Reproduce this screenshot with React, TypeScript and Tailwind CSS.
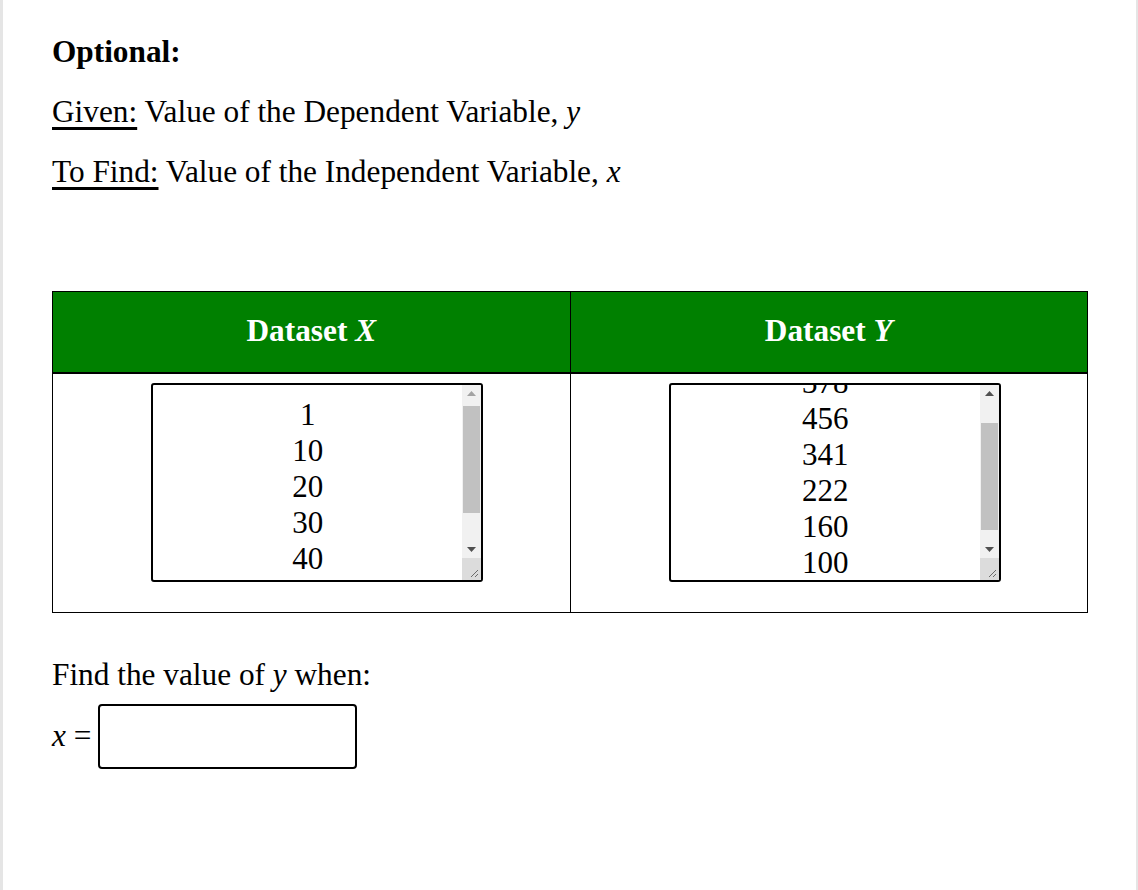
import React from "react";

const serif = { fontFamily: '"Liberation Serif", "Times New Roman", serif' };

const xValues = ["1", "10", "20", "30", "40"];
const yValues = ["378", "456", "341", "222", "160", "100"];

type ScrollBoxProps = {
  values: string[];
  offsetClass: string;
  thumbClass: string;
  upArrowColor: string;
};

const Triangle: React.FC<{ dir: "up" | "down"; color: string }> = ({ dir, color }) => (
  <svg width="9" height="5" viewBox="0 0 9 5">
    {dir === "up" ? (
      <polygon points="0,5 9,5 4.5,0" fill={color} />
    ) : (
      <polygon points="0,0 9,0 4.5,5" fill={color} />
    )}
  </svg>
);

// read-only list box that looks like a scrolled textarea
const ScrollBox: React.FC<ScrollBoxProps> = ({ values, offsetClass, thumbClass, upArrowColor }) => {
  return (
    <div className="flex h-[199px] w-[332px] overflow-hidden rounded-[3px] border-2 border-black bg-white">
      <div className="flex-1 overflow-hidden">
        <div className={`flex flex-col items-center ${offsetClass}`}>
          {values.map((v) => (
            <div key={v} className="h-[36px] text-[31px] leading-[36px] text-black">
              {v}
            </div>
          ))}
        </div>
      </div>
      <div className="flex w-[19px] flex-col bg-[#f1f1f1]">
        <div className="flex h-[17px] items-center justify-center">
          <Triangle dir="up" color={upArrowColor} />
        </div>
        <div className="flex-1 pl-[1px] pr-[1px]">
          <div className={`w-full bg-[#c1c1c1] ${thumbClass}`} />
        </div>
        <div className="flex h-[17px] items-center justify-center">
          <Triangle dir="down" color="#505050" />
        </div>
        <div className="flex h-[22px] items-end justify-end bg-[#dcdcdc] p-[2px]">
          <svg width="9" height="9" viewBox="0 0 9 9">
            <line x1="1" y1="8" x2="8" y2="1" stroke="#6b6b6b" strokeWidth="1" />
            <line x1="5" y1="8" x2="8" y2="5" stroke="#6b6b6b" strokeWidth="1" />
          </svg>
        </div>
      </div>
    </div>
  );
};

const App: React.FC = () => {
  return (
    <div
      className="flex min-h-[890px] w-full border-l-[3px] border-r-2 border-[#e5e5e5] bg-white text-black"
      style={serif}
    >
      <div className="w-full pl-[49px] pr-[48px] pt-[34px]">
        <h3 className="text-[31.3px] font-bold leading-[36px]">Optional:</h3>
        <p className="mt-[24px] text-[31.3px] leading-[36px]">
          <span className="underline underline-offset-[5px]">Given:</span> Value of the Dependent Variable,{" "}
          <i>y</i>
        </p>
        <p className="mt-[24px] text-[31.3px] leading-[36px]">
          <span className="underline underline-offset-[5px]">To Find:</span> Value of the Independent Variable,{" "}
          <i>x</i>
        </p>

        <table className="mt-[101px] w-full border-collapse border border-black">
          <thead>
            <tr className="h-[81px] bg-[#008000] text-white">
              <th className="w-1/2 border border-b-2 border-black text-[31.3px] font-bold">
                Dataset <i>X</i>
              </th>
              <th className="w-1/2 border border-b-2 border-black text-[31.3px] font-bold">
                Dataset <i>Y</i>
              </th>
            </tr>
          </thead>
          <tbody>
            <tr>
              <td className="border border-black pb-[30px] pl-[12px] pt-[9px]">
                <div className="flex justify-center">
                  <ScrollBox values={xValues} offsetClass="pt-[12px]" thumbClass="mt-[4px] h-[107px]" upArrowColor="#a3a3a3" />
                </div>
              </td>
              <td className="border border-black pb-[30px] pl-[12px] pt-[9px]">
                <div className="flex justify-center">
                  <ScrollBox values={yValues} offsetClass="-mt-[20px]" thumbClass="mt-[21px] h-[107px]" upArrowColor="#505050" />
                </div>
              </td>
            </tr>
          </tbody>
        </table>

        <p className="mt-[42px] text-[31.3px] leading-[40px]">
          Find the value of <i>y</i> when:
        </p>
        <div className="mt-[9px] flex items-center gap-[7px]">
          <span className="text-[31.3px] leading-[36px]">
            <i>x</i> =
          </span>
          <input type="text" className="h-[65px] w-[259px] rounded-[4px] border-2 border-black bg-white px-2 text-[26px] outline-none" />
        </div>
      </div>
    </div>
  );
};

export default App;
